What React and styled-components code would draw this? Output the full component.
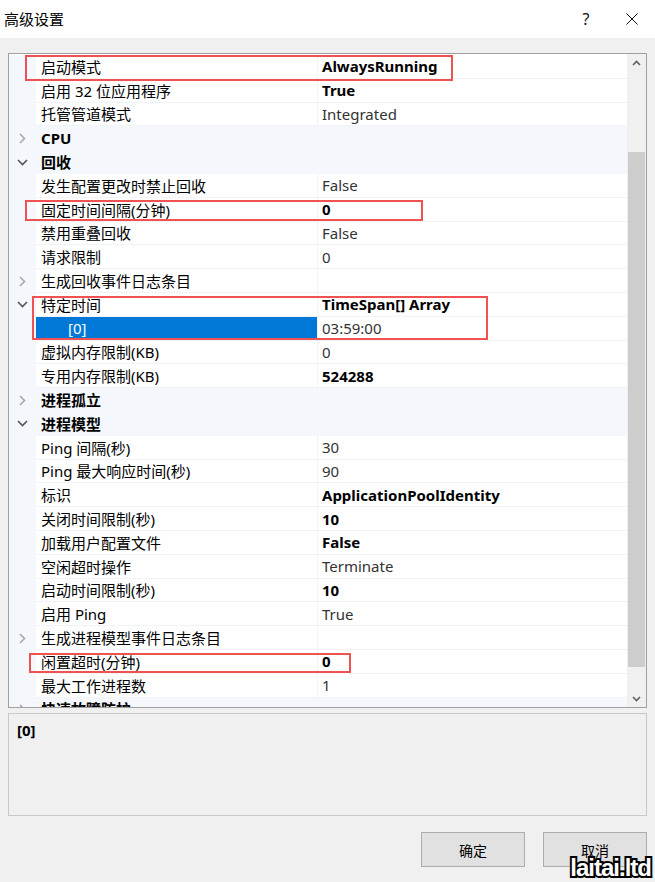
import React from 'react';
import styled, { createGlobalStyle } from 'styled-components';

const GlobalStyle = createGlobalStyle`
  html, body {
    margin: 0;
    padding: 0;
    background: #f0f0f0;
  }
  body {
    font-family: 'Noto Sans', 'Noto Sans CJK SC', sans-serif;
    color: #000;
  }
`;

const Window = styled.div`
  position: relative;
  width: 655px;
  height: 882px;
  background: #f0f0f0;
  overflow: hidden;
  display: flex;
  flex-direction: column;
`;

const TitleBar = styled.div`
  height: 38px;
  background: #fff;
  display: flex;
  align-items: center;
  padding-left: 4px;
  font-size: 15px;
`;

const Title = styled.div`
  flex: 1;
  margin-top: -2px;
`;

const TitleButton = styled.div`
  width: 46px;
  height: 38px;
  display: flex;
  align-items: center;
  justify-content: center;
  font-size: 16px;
  color: #111;
`;

const Body = styled.div`
  padding: 15px 8px 0 8px;
  display: flex;
  flex-direction: column;
`;

const Grid = styled.div`
  height: 655px;
  border: 1px solid #a0a0a0;
  box-sizing: border-box;
  background: #fff;
  display: flex;
`;

const Rows = styled.div`
  flex: 1;
  overflow: hidden;
  padding-top: 1px;
`;

const Row = styled.div`
  position: relative;
  height: 23.8px;
  display: grid;
  grid-template-columns: 27px 281px 1px 1fr;
  font-size: 15px;
  background: ${p => (p.category ? '#f4f7fc' : '#fff')};
`;

const Gutter = styled.div`
  background: #f4f7fc;
  display: flex;
  align-items: center;
  justify-content: center;
`;

const Label = styled.div`
  display: flex;
  align-items: center;
  padding-left: ${p => (p.indent ? 32 : 5)}px;
  white-space: nowrap;
  overflow: hidden;
  font-weight: ${p => (p.category ? 700 : 400)};
  background: ${p => (p.selected ? '#0078d7' : p.category ? '#f4f7fc' : '#fff')};
  color: ${p => (p.selected ? '#fff' : '#000')};
  border-bottom: 1px solid ${p => (p.category ? '#f4f7fc' : '#f0f3f8')};
  box-sizing: border-box;
`;

const Divider = styled.div`
  background: ${p => (p.category ? '#f4f7fc' : '#f0f3f8')};
`;

const Value = styled.div`
  display: flex;
  align-items: center;
  padding-left: 4px;
  white-space: nowrap;
  font-weight: ${p => (p.bold ? 700 : 400)};
  color: ${p => (p.bold ? '#000' : '#333')};
  border-bottom: 1px solid ${p => (p.category ? '#f4f7fc' : '#f0f3f8')};
  box-sizing: border-box;
`;

const Mark = styled.div`
  position: absolute;
  left: ${p => p.x}px;
  top: ${p => p.y}px;
  width: ${p => p.w}px;
  height: ${p => p.h}px;
  border: 2px solid #f05252;
  box-sizing: border-box;
  pointer-events: none;
  z-index: 2;
`;

const ScrollBar = styled.div`
  width: 19px;
  background: #f0f0f0;
  display: flex;
  flex-direction: column;
`;

const ScrollArrow = styled.div`
  height: 17px;
  display: flex;
  align-items: center;
  justify-content: center;
`;

const ScrollTrack = styled.div`
  flex: 1;
  padding: 81px 1px 0 1px;
`;

const Thumb = styled.div`
  height: 515px;
  background: #cdcdcd;
`;

const Description = styled.div`
  margin-top: 5px;
  height: 103px;
  border: 1px solid #c8c8c8;
  box-sizing: border-box;
  padding: 6px 8px;
  font-size: 15px;
  font-weight: 700;
`;

const Footer = styled.div`
  display: flex;
  justify-content: flex-end;
  gap: 18px;
  padding: 16px 0 0 0;
`;

const Button = styled.button`
  width: 104px;
  height: 35px;
  background: #e1e1e1;
  border: 1px solid #adadad;
  font-family: inherit;
  font-size: 14px;
  color: #000;
  padding: 0;
`;

const Watermark = styled.div`
  position: absolute;
  right: 4px;
  bottom: 0;
  font-family: 'Liberation Sans', Arial, sans-serif;
  font-weight: 700;
  font-size: 24px;
  letter-spacing: -1px;
  color: #fff;
  -webkit-text-stroke: 4px #000;
  paint-order: stroke fill;
`;

const Chevron = ({ open }) =>
  open ? (
    <svg width="11" height="7" viewBox="0 0 11 7">
      <polyline points="1,1 5.5,5.5 10,1" fill="none" stroke="#555" strokeWidth="1.6" />
    </svg>
  ) : (
    <svg width="7" height="11" viewBox="0 0 7 11">
      <polyline points="1,1 5.5,5.5 1,10" fill="none" stroke="#a8a8a8" strokeWidth="1.6" />
    </svg>
  );

const rows = [
  { label: '启动模式', value: 'AlwaysRunning', bold: true, mark: { x: 16, y: 0, w: 428, h: 26 } },
  { label: '启用 32 位应用程序', value: 'True', bold: true },
  { label: '托管管道模式', value: 'Integrated' },
  { label: 'CPU', category: true, toggle: 'closed' },
  { label: '回收', category: true, toggle: 'open' },
  { label: '发生配置更改时禁止回收', value: 'False' },
  { label: '固定时间间隔(分钟)', value: '0', bold: true, mark: { x: 16, y: 2, w: 398, h: 21 } },
  { label: '禁用重叠回收', value: 'False' },
  { label: '请求限制', value: '0' },
  { label: '生成回收事件日志条目', value: '', toggle: 'closed' },
  { label: '特定时间', value: 'TimeSpan[] Array', bold: true, toggle: 'open', mark: { x: 23, y: 3, w: 456, h: 44 } },
  { label: '[0]', value: '03:59:00', indent: true, selected: true },
  { label: '虚拟内存限制(KB)', value: '0' },
  { label: '专用内存限制(KB)', value: '524288', bold: true },
  { label: '进程孤立', category: true, toggle: 'closed' },
  { label: '进程模型', category: true, toggle: 'open' },
  { label: 'Ping 间隔(秒)', value: '30' },
  { label: 'Ping 最大响应时间(秒)', value: '90' },
  { label: '标识', value: 'ApplicationPoolIdentity', bold: true },
  { label: '关闭时间限制(秒)', value: '10', bold: true },
  { label: '加载用户配置文件', value: 'False', bold: true },
  { label: '空闲超时操作', value: 'Terminate' },
  { label: '启动时间限制(秒)', value: '10', bold: true },
  { label: '启用 Ping', value: 'True' },
  { label: '生成进程模型事件日志条目', value: '', toggle: 'closed' },
  { label: '闲置超时(分钟)', value: '0', bold: true, mark: { x: 20, y: 3, w: 322, h: 20 } },
  { label: '最大工作进程数', value: '1' },
  { label: '快速故障防护', category: true, toggle: 'closed' },
];

function PropertyRow({ row }) {
  return (
    <Row category={row.category}>
      <Gutter>{row.toggle && <Chevron open={row.toggle === 'open'} />}</Gutter>
      <Label category={row.category} indent={row.indent} selected={row.selected}>
        {row.label}
      </Label>
      <Divider category={row.category} />
      <Value bold={row.bold} category={row.category}>
        {row.value}
      </Value>
      {row.mark && <Mark {...row.mark} />}
    </Row>
  );
}

export default function App() {
  return (
    <>
      <GlobalStyle />
      <Window>
        <TitleBar>
          <Title>高级设置</Title>
          <TitleButton>?</TitleButton>
          <TitleButton>
            <svg width="12" height="12" viewBox="0 0 12 12">
              <path d="M0.5 0.5 L11.5 11.5 M11.5 0.5 L0.5 11.5" stroke="#111" strokeWidth="1" />
            </svg>
          </TitleButton>
        </TitleBar>
        <Body>
          <Grid>
            <Rows>
              {rows.map((row, i) => (
                <PropertyRow key={i} row={row} />
              ))}
            </Rows>
            <ScrollBar>
              <ScrollArrow>
                <svg width="9" height="6" viewBox="0 0 9 6">
                  <polyline points="1,5 4.5,1.5 8,5" fill="none" stroke="#606060" strokeWidth="1.6" />
                </svg>
              </ScrollArrow>
              <ScrollTrack>
                <Thumb />
              </ScrollTrack>
              <ScrollArrow>
                <svg width="9" height="6" viewBox="0 0 9 6">
                  <polyline points="1,1 4.5,4.5 8,1" fill="none" stroke="#606060" strokeWidth="1.6" />
                </svg>
              </ScrollArrow>
            </ScrollBar>
          </Grid>
          <Description>[0]</Description>
          <Footer>
            <Button>确定</Button>
            <Button>取消</Button>
          </Footer>
        </Body>
        <Watermark>laitai.ltd</Watermark>
      </Window>
    </>
  );
}
